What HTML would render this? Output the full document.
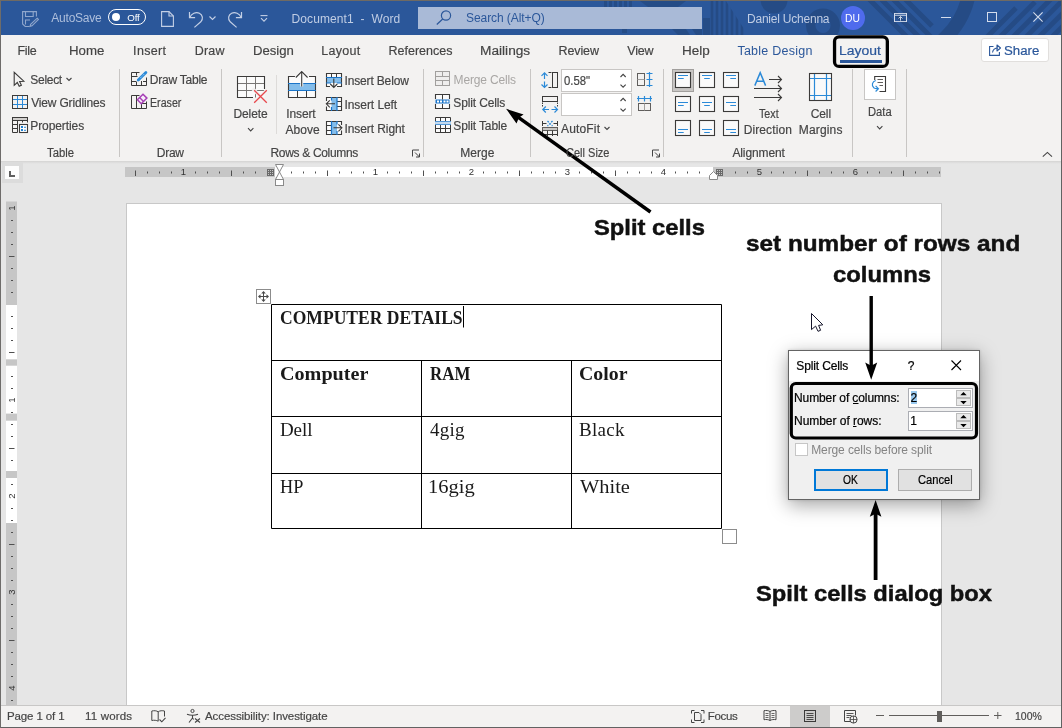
<!DOCTYPE html>
<html><head><meta charset="utf-8"><title>Document1 - Word</title>
<style>
html,body{margin:0;padding:0;}
body{width:1062px;height:728px;overflow:hidden;position:relative;background:#e6e6e6;font-family:"Liberation Sans",sans-serif;font-size:12px;color:#444;}
.a{position:absolute;}
.t{position:absolute;white-space:nowrap;line-height:normal;}
.rn{position:absolute;white-space:nowrap;}
.sep{position:absolute;width:1px;background:#c8c6c4;top:69px;height:88px;}
svg{position:absolute;overflow:visible;}
#titlebar{left:0;top:0;width:1062px;height:35px;background:#2b579a;}
#tabs{left:0;top:35px;width:1062px;height:33px;background:#f3f2f1;}
#ribbon{left:0;top:68px;width:1062px;height:93px;background:#f3f2f1;}
#ribshadow{left:0;top:161px;width:1062px;height:3px;background:linear-gradient(#d4d3d2,#e0e0e0 60%,#e6e6e6);}
#page{left:126px;top:203px;width:814px;height:502px;background:#fff;border:1px solid #c8c8c8;border-bottom:none;}
#status{left:0;top:705px;width:1062px;height:23px;background:#f3f2f1;border-top:1px solid #c8c7c6;box-sizing:border-box;}
</style></head><body>
<div id="titlebar" class="a"></div>
<div id="tabs" class="a"></div>
<div id="ribbon" class="a"></div>
<div id="ribshadow" class="a"></div>
<div id="page" class="a"></div>
<div id="status" class="a"></div>
<!-- title bar pattern -->
<svg class="a" style="left:700px;top:1px;" width="362" height="34" viewBox="700 1 362 34">
 <defs><clipPath id="tbc"><rect x="700" y="1" width="362" height="34"/></clipPath>
 <clipPath id="tbr"><rect x="925" y="1" width="137" height="34"/></clipPath>
 <clipPath id="tbv"><path d="M706 1H726L748 35H706Z"/></clipPath></defs>
 <g clip-path="url(#tbc)" fill="none" stroke="#000" opacity="0.13">
  <circle cx="774" cy="0" r="13.500" fill="#000" stroke="none"/>
  <circle cx="823" cy="25.500" r="12.300" stroke-width="9.500"/>
  <circle cx="890" cy="-20" r="80" stroke-width="14" clip-path="url(#tbr)"/>
  <g stroke-width="2.600" clip-path="url(#tbv)">
   <path d="M712 1v34M717 1v34M722 1v34M727 1v34M732 1v34M737 1v34M742 1v34"/>
  </g>
  <g stroke-width="5">
   <path d="M866 -4l44 44M878 -4l44 44M890 -4l44 44M902 -4l30 30"/>
   <path d="M984 40l32-32M997 40l38-38M1010 40l44-44M1023 40l44-44M1036 40l44-44M1049 40l44-44"/>
  </g>
 </g>
</svg>
<svg class="a" style="left:600px;top:1px;" width="110" height="34" viewBox="600 1 110 34">
 <g fill="#000" opacity="0.12">
  <path d="M604 1h3v6h-3zM609 1h3v6h-3zM614 1h3v6h-3zM619 1h3v6h-3zM624 1h3v6h-3zM629 1h3v6h-3z"/>
  <path d="M640 1h46l-8 6h-30z"/>
  <path d="M622 29h5v4h-5zM672 29h14l4 6h-12zM692 29h10v6h-6z"/>
  <path d="M703 18h7v17h-7z"/>
 </g>
</svg>
<!-- save icon -->
<svg class="a" style="left:22px;top:11px;" width="17" height="16" viewBox="0 0 17 16" fill="none" stroke="#8fa6cc" stroke-width="1.1">
 <path d="M7.5 15.5H3.2L0.6 13V0.6H14.4V5.5"/><path d="M3.5 0.6V5.5H11.2V0.6"/><path d="M3.5 13.5V9H8"/>
 <path d="M15.2 7.2l1.2 1.2-6.4 6.4-2 .6.6-2z"/>
</svg>
<!-- toggle -->
<div class="a" style="left:108px;top:9px;width:36px;height:14px;border:1px solid #fff;border-radius:8px;"></div>
<div class="a" style="left:112px;top:13px;width:8px;height:8px;border-radius:4px;background:#fff;"></div>
<!-- new doc -->
<svg class="a" style="left:160.5px;top:11px;" width="13" height="16" viewBox="0 0 13 16" fill="none" stroke="#c3cfe5" stroke-width="1.1">
 <path d="M0.6 0.6H8L12.4 5V15.4H0.6z"/><path d="M8 0.6V5H12.4"/>
</svg>
<!-- undo -->
<svg class="a" style="left:188px;top:10.5px;" width="16" height="17" viewBox="0 0 16 17" fill="none" stroke="#c3cfe5" stroke-width="1.2">
 <path d="M1.5 1v5.6h5.6"/><path d="M1.8 6.4C3.5 2.6 7.8 0.4 11.4 2.2c3.4 1.8 4 6 1.4 8.6L6.4 16.4"/>
</svg>
<svg class="a" style="left:209px;top:15.5px;" width="7" height="4" viewBox="0 0 7 4" fill="none" stroke="#c3cfe5" stroke-width="1.1"><path d="M0.5 0.5l3 3 3-3"/></svg>
<!-- redo -->
<svg class="a" style="left:227px;top:10.5px;" width="16" height="17" viewBox="0 0 16 17" fill="none" stroke="#c3cfe5" stroke-width="1.2">
 <path d="M14.5 1v5.6H8.9"/><path d="M14.2 6.4C12.500 2.6 8.2 0.4 4.6 2.2 1.2 4 0.600 8.2 3.200 10.8L9.6 16.4"/>
</svg>
<!-- customize qat -->
<svg class="a" style="left:259.5px;top:14.5px;" width="8" height="7" viewBox="0 0 8 7" fill="none" stroke="#c3cfe5" stroke-width="1.1"><path d="M0.5 0.6h7"/><path d="M1 3.2l3 3 3-3"/></svg>
<!-- search box -->
<div class="a" style="left:418px;top:7px;width:284px;height:22px;background:#a9bad7;"></div>
<svg class="a" style="left:436.200px;top:9.600px;" width="16" height="15" viewBox="0 0 16 15" fill="none" stroke="#2b579a" stroke-width="1.2">
 <circle cx="10" cy="5.500" r="4.600"/><path d="M6.700 9L0.800 14.500"/>
</svg>
<!-- avatar -->
<div class="a" style="left:841px;top:6px;width:24px;height:24px;border-radius:12px;background:#4f6bed;"></div>
<!-- ribbon display options -->
<svg class="a" style="left:893.500px;top:13px;" width="13" height="9" viewBox="0 0 13 10" preserveAspectRatio="none" fill="none" stroke="#d5ddec" stroke-width="1">
 <rect x="0.5" y="0.5" width="12" height="9"/><path d="M0.5 2.500h12"/><path d="M6.5 8.500V4M4.500 6l2-2 2 2"/>
</svg>
<!-- min/max/close -->
<div class="a" style="left:941px;top:17px;width:10px;height:1px;background:#d5ddec;"></div>
<div class="a" style="left:987px;top:12px;width:8px;height:8px;border:1px solid #d5ddec;"></div>
<svg class="a" style="left:1033px;top:12px;" width="10" height="10" viewBox="0 0 10 10" stroke="#d5ddec" stroke-width="1.1" fill="none"><path d="M0.400 0.400l9.200 9.200M9.600 0.400l-9.200 9.200"/></svg>

<!-- tabs extras -->
<div class="a" style="left:840px;top:60px;width:42px;height:3px;background:#2b579a;"></div>
<svg class="a" style="left:0;top:0;" width="1062" height="80" viewBox="0 0 1062 80" fill="none"><rect x="834.550" y="36.850" width="52.800" height="29.600" rx="4.500" stroke="#000" stroke-width="3.300"/></svg>
<div class="a" style="left:981px;top:38px;width:66px;height:22px;border:1px solid #e1dfdd;border-radius:3px;background:#fff;"></div>
<svg class="a" style="left:989px;top:43.500px;" width="13" height="12" viewBox="0 0 13 12" fill="none" stroke="#2b579a" stroke-width="1.1">
 <path d="M4.500 2.500H0.600V11.400H10.400V8"/><path d="M3.500 8.500C4 5.500 6 4 9 4"/><path d="M8 1l3.500 3L8 7z" stroke-linejoin="round"/>
</svg>

<!-- separators -->
<div class="sep" style="left:119px;"></div>
<div class="sep" style="left:221px;"></div>
<div class="sep" style="left:423px;"></div>
<div class="sep" style="left:530px;"></div>
<div class="sep" style="left:663px;"></div>
<div class="sep" style="left:852px;"></div>
<div class="sep" style="left:906px;"></div>
<div class="a" style="left:276px;top:75px;width:1px;height:59px;background:#dddbd9;"></div>
<!-- Select -->
<svg class="a" style="left:0;top:0;" width="1062" height="170" viewBox="0 0 1062 170" fill="none">
 <path d="M14.200 72.300V85.300L17.300 82.500 19.200 86.300 21.400 85.200 19.600 81.400 23.800 81.200Z" stroke="#3b3a39" stroke-width="1.1" stroke-linejoin="miter"/>
 <path d="M66.500 78l2.500 2.500 2.500-2.500" stroke="#444" stroke-width="1.100"/>
 <!-- view gridlines -->
 <path d="M17.500 95.500v13M22.500 95.500v13M12.500 99.500h15M12.500 104.500h15" stroke="#2b8ad8" stroke-width="1"/>
 <rect x="12.500" y="95.500" width="15" height="13" stroke="#3b3a39" stroke-width="1"/>
 <!-- properties -->
 <rect x="12.500" y="117.500" width="15" height="3" fill="#d2d0ce" stroke="#3b3a39" stroke-width="1"/>
 <path d="M12.500 120.500V132.500H17.500M12.500 124.500h5M12.500 128.500h5M17.500 120.500v12M22.500 120.500v2M27.500 120.500v2" stroke="#3b3a39" stroke-width="1"/>
 <rect x="19.500" y="124.500" width="8" height="8" fill="#fff" stroke="#3b3a39" stroke-width="1.100"/>
 <path d="M21 126h2v2h-2zM21 129h2v2h-2zM24 126.800h2v1h-2zM24 129.800h2v1h-2z" fill="#1e7fd0" stroke="none"/>
 <!-- draw table -->
 <path d="M131.500 72.500v13h15v-8M131.500 72.500h8M131.500 76.500h6M131.500 81.500h5M136.500 72.500v3M136.500 82v3.500M141.500 81v4.500M143 81.500h3.500" stroke="#3b3a39" stroke-width="1"/>
 <path d="M138.300 80l7.600-7.600" stroke="#2b8ad8" stroke-width="2.800" stroke-linecap="round"/>
 <path d="M137.400 80.800l1.600-0.400-1.200-1.200z" fill="#2b8ad8" stroke="#2b8ad8" stroke-width="0.800"/>
 <path d="M140.500 77.800l4.200-4.200" stroke="#fff" stroke-width="0.700" stroke-dasharray="1 1"/>
 <!-- eraser -->
 <path d="M131.500 95.500v13h15v-7M131.500 95.500h8M136.500 95.500v13M141.500 103v5.500M141.500 103.500h5" stroke="#3b3a39" stroke-width="1"/>
 <path d="M143 94.200l3.900 3.900-5.600 5.600-3.900-3.900z" fill="#f6eef8" stroke="#a63fb5" stroke-width="1.500" stroke-linejoin="miter"/>
 <path d="M139.600 97.500l3.900 3.900" stroke="#a63fb5" stroke-width="1.400"/>
</svg>

<svg class="a" style="left:0;top:0;" width="1062" height="170" viewBox="0 0 1062 170" fill="none">
 <!-- Delete -->
 <rect x="237.500" y="76.500" width="27" height="21" fill="#fbfbfb" stroke="none"/>
 <path d="M246.500 76.500v21M255.500 76.500v21M237.500 83.500h27M237.500 90.500h27" stroke="#797775" stroke-width="1"/>
 <path d="M264.500 89V76.500H237.500V97.500H253" stroke="#3b3a39" stroke-width="1.100"/>
 <path d="M252.500 88.500L268.500 104.500M268.500 88.500L252.500 104.500" stroke="#f3f2f1" stroke-width="3.600"/>
 <path d="M254.200 90.200L266.800 102.800M266.800 90.200L254.200 102.800" stroke="#e8474c" stroke-width="1.300"/>
 <path d="M248 128.200l2.700 2.700 2.700-2.700" stroke="#444" stroke-width="1.100"/>
 <!-- Insert Above -->
 <rect x="288.500" y="76.500" width="27" height="21" fill="#fbfbfb" stroke="none"/>
 <rect x="288.500" y="83.500" width="27" height="7" fill="#83bdeb" stroke="none"/>
 <path d="M297.500 90.500v7M306.500 90.500v7" stroke="#3b3a39" stroke-width="1"/>
 <path d="M295 76.500H288.500V97.500H315.500V76.500H309" stroke="#3b3a39" stroke-width="1.100"/>
 <path d="M288 83.500h28M288 90.500h28" stroke="#1b75c9" stroke-width="1.200"/>
 <path d="M301.700 86.500V72M295.800 77.500l5.900-5.900 5.900 5.900" stroke="#fbfbfb" stroke-width="3"/>
 <path d="M301.700 86.500V72M295.800 77.500l5.900-5.900 5.900 5.900" stroke="#3b3a39" stroke-width="1.100"/>
 <!-- Insert Below -->
 <rect x="326.500" y="73.500" width="15" height="13" fill="#fbfbfb" stroke="none"/>
 <rect x="326.500" y="77.500" width="15" height="5.500" fill="#83bdeb" stroke="none"/>
 <path d="M331.500 73.500v4M336.500 73.500v4" stroke="#3b3a39" stroke-width="1"/>
 <path d="M330 86.500H326.500V73.500H341.500V86.500H337" stroke="#3b3a39" stroke-width="1.100"/>
 <path d="M326 77.500h16M326 83h5M337 83h5" stroke="#1b75c9" stroke-width="1.200"/>
 <path d="M333.800 78.500V87.300M330.300 84l3.500 3.500 3.500-3.500" stroke="#3b3a39" stroke-width="1.100"/>
 <!-- Insert Left -->
 <rect x="326.500" y="97.500" width="15" height="13" fill="#fbfbfb" stroke="none"/>
 <rect x="331.500" y="97.500" width="5.500" height="13" fill="#83bdeb" stroke="none"/>
 <path d="M337 101.500h4.500M337 106.500h4.500" stroke="#3b3a39" stroke-width="1"/>
 <path d="M326.500 101V97.500H341.500V110.500H326.500V106.500" stroke="#3b3a39" stroke-width="1.100"/>
 <path d="M331.500 97v3.500M331.500 107v4M337 97v14" stroke="#1b75c9" stroke-width="1.200"/>
 <path d="M335 103.800H326.500M329.800 100.300l-3.500 3.500 3.500 3.500" stroke="#3b3a39" stroke-width="1.100"/>
 <!-- Insert Right -->
 <rect x="326.500" y="121.500" width="15" height="13" fill="#fbfbfb" stroke="none"/>
 <rect x="331.500" y="121.500" width="5.500" height="13" fill="#83bdeb" stroke="none"/>
 <path d="M326.500 125.500h5M326.500 130.500h5" stroke="#3b3a39" stroke-width="1"/>
 <path d="M341.500 125V121.500H326.500V134.500H341.500V130.500" stroke="#3b3a39" stroke-width="1.100"/>
 <path d="M331.500 121v14M337 121v3.500M337 131v4" stroke="#1b75c9" stroke-width="1.200"/>
 <path d="M333.500 127.800H341.800M338.400 124.300l3.500 3.500-3.500 3.500" stroke="#3b3a39" stroke-width="1.100"/>
 <!-- dialog launcher rows&cols -->
 <path d="M412.500 156.500v-6.500h6.500" stroke="#444" stroke-width="1"/><path d="M415 152.500l4.500 4.500M419.500 153.500v3.500h-3.500" stroke="#444" stroke-width="1"/>
 <!-- dialog launcher cell size -->
 <path d="M652.500 156.500v-6.500h6.500" stroke="#444" stroke-width="1"/><path d="M655 152.500l4.500 4.500M659.500 153.500v3.500h-3.500" stroke="#444" stroke-width="1"/>
</svg>

<div class="a" style="left:561px;top:69px;width:69px;height:21px;background:#fff;border:1px solid #c8c6c4;"></div>
<div class="a" style="left:561px;top:93px;width:69px;height:21px;background:#fff;border:1px solid #c8c6c4;"></div>
<svg class="a" style="left:0;top:0;" width="1062" height="170" viewBox="0 0 1062 170" fill="none">
 <!-- Merge Cells (disabled) -->
 <rect x="435.500" y="71.500" width="14" height="14" fill="#efeeed" stroke="#a19f9d" stroke-width="1"/>
 <path d="M435.500 76.500h14M435.500 80.500h14M442.500 71.500v5M442.500 80.500v5" stroke="#a19f9d" stroke-width="1"/>
 <!-- Split Cells -->
 <rect x="435.500" y="94.500" width="14" height="14" fill="#fbfbfb" stroke="none"/>
 <rect x="435.500" y="99.500" width="14" height="4" fill="#1b75c9" stroke="none"/>
 <path d="M437 100.500h2v2h-2zM440 100.500h2v2h-2zM443.500 100.500h2v2h-2zM446.500 100.500h2v2h-2z" fill="#fff" stroke="none"/>
 <path d="M442.500 94.500v5M442.500 104v4.500" stroke="#3b3a39" stroke-width="1"/>
 <path d="M435.500 99V94.500H449.500V99M435.500 104V108.500H449.500V104" stroke="#3b3a39" stroke-width="1.100"/>
 <!-- Split Table -->
 <rect x="435.500" y="117.500" width="15" height="15" fill="#fbfbfb" stroke="none"/>
 <path d="M435.500 121V117.500H450.500V121M440.500 117.500v3.500M445.500 117.500v3.500" stroke="#3b3a39" stroke-width="1"/>
 <path d="M435 121.700h16M435 124.300h16" stroke="#1b75c9" stroke-width="1.100"/>
 <path d="M435.500 125V132.500H450.500V125M440.500 125v7.500M445.500 125v7.500M435.500 128.500h15" stroke="#3b3a39" stroke-width="1"/>
 <!-- Height icon -->
 <path d="M544.500 73V79M544.500 81.500V87.500M541.500 75.800l3-3 3 3M541.500 84.500l3 3 3-3" stroke="#2b8ad8" stroke-width="1.200"/>
 <path d="M548.500 72.500h3M548.500 87.500h3" stroke="#3b3a39" stroke-width="1"/>
 <rect x="552.500" y="72.500" width="5" height="15" stroke="#3b3a39" stroke-width="1"/>
 <!-- Width icon -->
 <rect x="542.500" y="96.500" width="15" height="5" stroke="#3b3a39" stroke-width="1"/>
 <path d="M542.500 102.500v4M557.500 102.500v4" stroke="#3b3a39" stroke-width="1" stroke-dasharray="1.500 1"/>
 <path d="M543 109.500H549M551.500 109.500H557.500M545.800 106.500l-3 3 3 3M554.500 106.500l3 3-3 3" stroke="#2b8ad8" stroke-width="1.200"/>
 <!-- spinners -->
 <path d="M620.500 77l2.600-2.600 2.600 2.600M620.500 84.600l2.600 2.600 2.600-2.600" stroke="#444" stroke-width="1.100"/>
 <path d="M620.500 101l2.600-2.600 2.600 2.600M620.500 108.600l2.600 2.600 2.600-2.600" stroke="#444" stroke-width="1.100"/>
 <!-- Distribute rows -->
 <rect x="637.500" y="73.500" width="7" height="12" stroke="#605e5c" stroke-width="1"/><path d="M637.500 79.500h7" stroke="#a19f9d" stroke-width="1"/>
 <path d="M649.500 72v15M646.500 73.500h6M646.500 79.500h6M646.500 85.500h6" stroke="#2b8ad8" stroke-width="1.200"/>
 <!-- Distribute cols -->
 <path d="M637 98.500h15M638.500 96v5.500M644.500 96v5.500M650.500 96v5.500" stroke="#2b8ad8" stroke-width="1.200"/>
 <rect x="638.500" y="103.500" width="12" height="7" stroke="#605e5c" stroke-width="1"/><path d="M644.500 103.500v7" stroke="#a19f9d" stroke-width="1"/>
 <!-- AutoFit icon -->
 <path d="M542.500 121v5M557.500 121v5M542.500 123.500h4M553.500 123.500h4" stroke="#3b3a39" stroke-width="1"/>
 <path d="M547.500 121l5 5M552.500 121l-5 5" stroke="#2b8ad8" stroke-width="1.300" stroke-dasharray="1.800 1.200"/>
 <rect x="542.500" y="127.500" width="15" height="3" fill="#c8c6c4" stroke="#605e5c" stroke-width="1"/>
 <path d="M542.500 130.500V136M557.500 130.500V136M547.500 130.500V136M552.500 130.500V136M542.500 134.500h15" stroke="#3b3a39" stroke-width="1"/>
 <path d="M604.500 127l2.500 2.500 2.500-2.500" stroke="#444" stroke-width="1.100"/>
</svg>

<div class="a" style="left:864px;top:69px;width:32px;height:31px;background:#fff;border:1px solid #c8c6c4;box-sizing:border-box;"></div>
<div class="a" style="left:672px;top:69px;width:20px;height:21px;background:#c8c6c4;border:1px solid #a19f9d;"></div>
<svg class="a" style="left:0;top:0;" width="1062" height="170" viewBox="0 0 1062 170" fill="none">
<rect x="675.5" y="72.5" width="15" height="15" fill="#fafafa" stroke="#3b3a39" stroke-width="1.1"/>
<path d="M678.0 75.5H688.0M678.0 78.5H683.7" stroke="#2b8ad8" stroke-width="1.2"/>
<rect x="699.5" y="72.5" width="15" height="15" fill="#fafafa" stroke="#3b3a39" stroke-width="1.1"/>
<path d="M702.0 75.5H712.0M704.2 78.5H709.8" stroke="#2b8ad8" stroke-width="1.2"/>
<rect x="723.5" y="72.5" width="15" height="15" fill="#fafafa" stroke="#3b3a39" stroke-width="1.1"/>
<path d="M726.0 75.5H736.0M730.3 78.5H736.0" stroke="#2b8ad8" stroke-width="1.2"/>
<rect x="675.5" y="96.5" width="15" height="15" fill="#fafafa" stroke="#3b3a39" stroke-width="1.1"/>
<path d="M678.0 102.5H688.0M678.0 105.5H683.7" stroke="#2b8ad8" stroke-width="1.2"/>
<rect x="699.5" y="96.5" width="15" height="15" fill="#fafafa" stroke="#3b3a39" stroke-width="1.1"/>
<path d="M702.0 102.5H712.0M704.2 105.5H709.8" stroke="#2b8ad8" stroke-width="1.2"/>
<rect x="723.5" y="96.5" width="15" height="15" fill="#fafafa" stroke="#3b3a39" stroke-width="1.1"/>
<path d="M726.0 102.5H736.0M730.3 105.5H736.0" stroke="#2b8ad8" stroke-width="1.2"/>
<rect x="675.5" y="120.5" width="15" height="15" fill="#fafafa" stroke="#3b3a39" stroke-width="1.1"/>
<path d="M678.0 129.5H688.0M678.0 132.5H683.7" stroke="#2b8ad8" stroke-width="1.2"/>
<rect x="699.5" y="120.5" width="15" height="15" fill="#fafafa" stroke="#3b3a39" stroke-width="1.1"/>
<path d="M702.0 129.5H712.0M704.2 132.5H709.8" stroke="#2b8ad8" stroke-width="1.2"/>
<rect x="723.5" y="120.5" width="15" height="15" fill="#fafafa" stroke="#3b3a39" stroke-width="1.1"/>
<path d="M726.0 129.5H736.0M730.3 132.5H736.0" stroke="#2b8ad8" stroke-width="1.2"/>
<path d="M769 79.500H781.500M778 76l3.500 3.500-3.500 3.500" stroke="#3b3a39" stroke-width="1.1"/>
<path d="M754 88.500H781.500M778 85l3.500 3.500-3.500 3.500" stroke="#3b3a39" stroke-width="1.1"/>
<path d="M754 97.500H781.500M778 94l3.500 3.500-3.500 3.500" stroke="#3b3a39" stroke-width="1.1"/>
<path d="M754.800 85.600L760.200 72.600 765.600 85.600M756.600 81.200H763.800" stroke="#2b8ad8" stroke-width="1.500" stroke-linejoin="miter"/>
<rect x="809.500" y="73.500" width="22" height="27" fill="#fafafa" stroke="none"/>
<path d="M814.500 73.500v27M826.500 73.500v27M809.500 78.500h22M809.500 95.500h22" stroke="#2b8ad8" stroke-width="1.200"/>
<rect x="809.500" y="73.500" width="22" height="27" stroke="#3b3a39" stroke-width="1.100"/>
<path d="M874.700 80V76.500H885.500V91.500H879.500" stroke="#3b3a39" stroke-width="1.100"/>
<path d="M877.500 79.500h5.500M877.500 82.500h5.500M879.500 85.500h3.500" stroke="#605e5c" stroke-width="1"/>
<path d="M875.800 80.500C872.200 81.500 871.200 85.500 873.800 87.700 874.800 88.500 876.200 88.800 877.800 88.700M875.600 85.900l2.800 2.800-2.800 2.800" stroke="#2b8ad8" stroke-width="1.200"/>
<path d="M877 126.200l2.700 2.700 2.700-2.700" stroke="#444" stroke-width="1.100"/>
<path d="M1042.800 156.700l4.600-4.300 4.600 4.300" stroke="#444" stroke-width="1.100"/>
</svg>
<div class="a" style="left:2px;top:162px;width:21px;height:21px;background:#dcdcdc;"></div>
<div class="a" style="left:5px;top:166px;width:14px;height:13px;background:#fdfdfd;"></div>
<div class="a" style="left:9px;top:171px;width:2px;height:6px;background:#5f5f5f;"></div><div class="a" style="left:9px;top:175px;width:6px;height:2px;background:#5f5f5f;"></div>
<div class="a" style="left:125px;top:167px;width:816px;height:10px;background:#c6c6c6;"></div>
<div class="a" style="left:275px;top:167px;width:438px;height:10px;background:#fff;"></div>
<svg class="a" style="left:0;top:0;" width="1062" height="728" viewBox="0 0 1062 728" fill="none">
<path d="M135.5 170.5v5.5M147.5 171.5v2M159.5 171.5v2M171.5 171.5v2M195.5 171.5v2M207.5 171.5v2M219.5 171.5v2M231.5 170.5v5.5M243.5 171.5v2M255.5 171.5v2M291.5 171.5v2M303.5 171.5v2M315.5 171.5v2M327.5 170.5v5.5M339.5 171.5v2M351.5 171.5v2M363.5 171.5v2M387.5 171.5v2M399.5 171.5v2M411.5 171.5v2M423.5 170.5v5.5M435.5 171.5v2M447.5 171.5v2M459.5 171.5v2M483.5 171.5v2M495.5 171.5v2M507.5 171.5v2M519.5 170.5v5.5M531.5 171.5v2M543.5 171.5v2M555.5 171.5v2M579.5 171.5v2M591.5 171.5v2M603.5 171.5v2M615.5 170.5v5.5M627.5 171.5v2M639.5 171.5v2M651.5 171.5v2M675.5 171.5v2M687.5 171.5v2M699.5 171.5v2M735.5 171.5v2M747.5 171.5v2M771.5 171.5v2M783.5 171.5v2M795.5 171.5v2M807.5 170.5v5.5M819.5 171.5v2M831.5 171.5v2M843.5 171.5v2M867.5 171.5v2M879.5 171.5v2M891.5 171.5v2M903.5 170.5v5.5M915.5 171.5v2M927.5 171.5v2M939.5 171.5v2" stroke="#505050" stroke-width="1"/>
<path d="M267.5 169v7M269.5 169v7M271.5 169v7M273.5 169v7M267 169.5h7M267 171.5h7M267 173.5h7M267 175.5h7" stroke="#6a6a6a" stroke-width="1"/>
<path d="M716.5 169v7M718.5 169v7M720.5 169v7M722.5 169v7M716 169.5h7M716 171.5h7M716 173.5h7M716 175.5h7" stroke="#6a6a6a" stroke-width="1"/>
<path d="M275.500 164.500H283.500L279.500 172L283.500 179.500H275.500L279.500 172Z" fill="#fff" stroke="#8a8a8a" stroke-width="1"/>
<rect x="275.500" y="179.500" width="8" height="6" fill="#fff" stroke="#8a8a8a" stroke-width="1"/>
<path d="M709.500 179.500V175.500L713.500 171.500L717.500 175.500V179.500Z" fill="#fff" stroke="#8a8a8a" stroke-width="1"/>
<rect x="6" y="201.500" width="11" height="503.500" fill="#c6c6c6"/>
<rect x="6" y="305" width="11" height="54.30000000000001" fill="#fff"/>
<rect x="6" y="365.7" width="11" height="47.900000000000034" fill="#fff"/>
<rect x="6" y="420.7" width="11" height="50.30000000000001" fill="#fff"/>
<rect x="6" y="478" width="11" height="45" fill="#fff"/>
<path d="M11 220.5h2M11 232.5h2M11 244.5h2M9 256.5h5.5M11 268.5h2M11 280.5h2M11 292.5h2M11 316.5h2M11 328.5h2M11 340.5h2M9 352.5h5.5M11 376.5h2M11 388.5h2M11 412.5h2M11 424.5h2M11 436.5h2M9 448.5h5.5M11 460.5h2M11 484.5h2M11 508.5h2M11 520.5h2M11 532.5h2M9 544.5h5.5M11 556.5h2M11 568.5h2M11 580.5h2M11 604.5h2M11 616.5h2M11 628.5h2M9 640.5h5.5M11 652.5h2M11 664.5h2M11 676.5h2M11 700.5h2" stroke="#505050" stroke-width="1"/>
</svg>
<div class="a" style="left:0;top:0;width:1062px;height:728px;will-change:transform;">
<span class="rn" style="left:178.3px;top:167px;width:10px;text-align:center;font-size:9.500px;line-height:10px;color:#333;">1</span>
<span class="rn" style="left:370.3px;top:167px;width:10px;text-align:center;font-size:9.500px;line-height:10px;color:#333;">1</span>
<span class="rn" style="left:466.3px;top:167px;width:10px;text-align:center;font-size:9.500px;line-height:10px;color:#333;">2</span>
<span class="rn" style="left:562.3px;top:167px;width:10px;text-align:center;font-size:9.500px;line-height:10px;color:#333;">3</span>
<span class="rn" style="left:658.3px;top:167px;width:10px;text-align:center;font-size:9.500px;line-height:10px;color:#333;">4</span>
<span class="rn" style="left:754.3px;top:167px;width:10px;text-align:center;font-size:9.500px;line-height:10px;color:#333;">5</span>
<span class="rn" style="left:850.3px;top:167px;width:10px;text-align:center;font-size:9.500px;line-height:10px;color:#333;">6</span>
<span class="rn" style="left:6.5px;top:203.4px;width:10px;height:10px;text-align:center;font-size:9.500px;line-height:10px;color:#333;transform:rotate(-90deg);">1</span>
<span class="rn" style="left:6.5px;top:395.4px;width:10px;height:10px;text-align:center;font-size:9.500px;line-height:10px;color:#333;transform:rotate(-90deg);">1</span>
<span class="rn" style="left:6.5px;top:491.4px;width:10px;height:10px;text-align:center;font-size:9.500px;line-height:10px;color:#333;transform:rotate(-90deg);">2</span>
<span class="rn" style="left:6.5px;top:587.4px;width:10px;height:10px;text-align:center;font-size:9.500px;line-height:10px;color:#333;transform:rotate(-90deg);">3</span>
<span class="rn" style="left:6.5px;top:683.4px;width:10px;height:10px;text-align:center;font-size:9.500px;line-height:10px;color:#333;transform:rotate(-90deg);">4</span>
</div>
<!-- document table -->
<svg class="a" style="left:0;top:0;" width="1062" height="728" viewBox="0 0 1062 728" fill="none">
 <path d="M271.500 304.500H721.500V528.500H271.500ZM271 360.500H722M271 416.500H722M271 473.500H722M421.500 360.500V528.500M571.500 360.500V528.500" stroke="#000" stroke-width="1"/>
 <!-- move handle -->
 <rect x="256.500" y="289.500" width="14" height="14" fill="#fff" stroke="#8c8c8c" stroke-width="1"/>
 <path d="M259 296.500h9M263.500 292v9" stroke="#4a4a4a" stroke-width="1"/>
 <path d="M258 296.500l2.500-2.300v4.600zM269 296.500l-2.500-2.300v4.600zM263.500 291l-2.300 2.500h4.600zM263.500 302l-2.300-2.500h4.600z" fill="#4a4a4a"/>
 <!-- resize handle -->
 <rect x="722.500" y="529.500" width="14" height="14" fill="#fff" stroke="#8c8c8c" stroke-width="1"/>
 <!-- text caret -->
 <path d="M463.500 306v21.500" stroke="#000" stroke-width="1"/>
</svg>

<!-- dialog -->
<div class="a" style="left:788px;top:350px;width:190px;height:148px;background:#f0f0f0;border:1px solid #646464;box-shadow:0 5px 18px rgba(0,0,0,0.36),0 0 3px rgba(0,0,0,0.15);"></div>
<div class="a" style="left:789px;top:351px;width:190px;height:30px;background:#fff;"></div>
<div class="a" style="left:908px;top:388px;width:63px;height:18px;background:#fff;border:1px solid #abadb3;"></div>
<div class="a" style="left:908px;top:411px;width:63px;height:18px;background:#fff;border:1px solid #abadb3;"></div>
<div class="a" style="left:911px;top:391px;width:6px;height:13px;background:#99c9ef;"></div>
<div class="a" style="left:956px;top:390px;width:15px;height:8px;background:#e9e9e9;border:1px solid #bcbcbc;box-sizing:border-box;"></div>
<div class="a" style="left:956px;top:398px;width:15px;height:8px;background:#e9e9e9;border:1px solid #bcbcbc;box-sizing:border-box;"></div>
<div class="a" style="left:956px;top:413px;width:15px;height:8px;background:#e9e9e9;border:1px solid #bcbcbc;box-sizing:border-box;"></div>
<div class="a" style="left:956px;top:421px;width:15px;height:8px;background:#e9e9e9;border:1px solid #bcbcbc;box-sizing:border-box;"></div>
<div class="a" style="left:795px;top:443px;width:11px;height:11px;background:#fff;border:1px solid #c6c6c6;"></div>
<div class="a" style="left:814px;top:469px;width:70px;height:18px;background:#e1e1e1;border:2px solid #0078d7;"></div>
<div class="a" style="left:898px;top:469px;width:72px;height:20px;background:#e1e1e1;border:1px solid #adadad;"></div>
<svg class="a" style="left:0;top:0;" width="1062" height="728" viewBox="0 0 1062 728" fill="none">
 <path d="M951.500 360.500l9.500 9.500M961 360.500l-9.500 9.500" stroke="#000" stroke-width="1.100"/>
 <path d="M960.300 395.300l3.200-3.400 3.200 3.400zM960.300 400.900l3.200 3.400 3.200-3.400zM960.300 418.300l3.200-3.400 3.200 3.400zM960.300 423.900l3.200 3.400 3.200-3.400z" fill="#000"/>
 <path d="M853 403.500h5.500M853 426.500h3.500" stroke="#000" stroke-width="1"/>
 <rect x="791.300" y="383.500" width="185.200" height="54.500" rx="4.500" stroke="#000" stroke-width="3.200"/>
</svg>

<svg class="a" style="left:0;top:0;" width="1062" height="728" viewBox="0 0 1062 728" fill="none">
 <!-- arrow 1: to Split Cells -->
 <path d="M650.500 212L517 116.300" stroke="#000" stroke-width="3.500"/>
 <path d="M506.100 108.800L523.600 114.500L519 117.400L516.500 123.500Z" fill="#000"/>
 <!-- arrow 2: down to dialog -->
 <path d="M871.200 296V368" stroke="#000" stroke-width="3.400"/>
 <path d="M871.200 379.800L865.200 362.500L871.200 365.800L877.200 362.500Z" fill="#000"/>
 <!-- arrow 3: up to dialog -->
 <path d="M875.600 580V512" stroke="#000" stroke-width="3.800"/>
 <path d="M875.600 500L869.800 516.800L875.600 513.800L881.400 516.800Z" fill="#000"/>
 <!-- mouse cursor -->
 <path d="M811.500 313.500V329.600L815.600 326.100L818 331.300L820.600 330.300L818.600 325.400L822.800 324.800Z" fill="#fff" stroke="#15152a" stroke-width="1" stroke-linejoin="round"/>
</svg>

<div class="a" style="left:790px;top:706px;width:40px;height:22px;background:#cdcccb;"></div>
<svg class="a" style="left:0;top:0;" width="1062" height="728" viewBox="0 0 1062 728" fill="none">
 <!-- book / proofing -->
 <path d="M158.200 711.800V721.200M158.200 711.800C156.500 710.600 154 710.500 151.800 711V720.500C154 720 156.500 720.200 158.200 721.200M158.200 711.800C159.800 710.600 162.300 710.500 164.500 711V716.500" stroke="#444" stroke-width="1"/>
 <path d="M159.500 719.500l2.300 2.300 3.700-3.900" stroke="#444" stroke-width="1.100"/>
 <!-- accessibility -->
 <circle cx="192.500" cy="711" r="1.600" stroke="#444" stroke-width="1"/>
 <path d="M187 714.200c2 .9 3.700 1.100 5.500 1.100s3.500-.2 5.500-1.100M192.500 715.300v2.700M192.500 718l-3.500 4.500M192.500 718l1.200 1.500" stroke="#444" stroke-width="1.100"/>
 <path d="M195 718.500l5 4M200 718.500l-5 4" stroke="#444" stroke-width="1.100"/>
 <!-- focus -->
 <path d="M691.500 713.500v-3h3M701 710.500h3v3M704 719.500v3h-3M694.500 722.500h-3v-3" stroke="#444" stroke-width="1"/>
 <path d="M694.500 712.500h4.500l2 2v6h-6.500z" stroke="#444" stroke-width="1"/>
 <!-- read mode -->
 <path d="M770 711.500v9M770 711.500c-1.500-1-4-1.200-6-.8v9c2-.4 4.500-.2 6 .8M770 711.500c1.500-1 4-1.200 6-.8v9c-2-.4-4.500-.2-6 .8" stroke="#444" stroke-width="1"/>
 <path d="M765.500 713.500h3M765.500 715.500h3M765.500 717.500h3M771.500 713.500h3M771.500 715.500h3M771.500 717.500h3" stroke="#444" stroke-width="0.800"/>
 <!-- print layout -->
 <rect x="804.500" y="710.500" width="11" height="11" stroke="#3b3a39" stroke-width="1"/>
 <path d="M806.500 713.500h7M806.500 715.500h7M806.500 717.500h7M806.500 719.500h7" stroke="#3b3a39" stroke-width="0.900"/>
 <!-- web layout -->
 <path d="M850 721.500h-5.500v-11h11v5" stroke="#444" stroke-width="1"/>
 <path d="M846.500 713.500h7M846.500 715.500h5M846.500 717.500h3" stroke="#444" stroke-width="0.900"/>
 <circle cx="853.500" cy="719.500" r="3.600" fill="#f3f2f1" stroke="#444" stroke-width="1"/>
 <path d="M850 719.500h7M853.500 716v7" stroke="#444" stroke-width="0.800"/>
 <!-- zoom -->
 <path d="M876 715.500h8M889 715.500h100M994 715.500h7.500M997.800 712v7" stroke="#605e5c" stroke-width="1"/>
 <rect x="937" y="711" width="5" height="11" fill="#605e5c"/>
</svg>
<div class="a" style="left:1061px;top:0;width:1px;height:728px;background:#626262;"></div>
<div class="a" style="left:0;top:727px;width:1062px;height:1px;background:#626262;"></div>


<div class="a" style="left:0;top:0;width:1062px;height:728px;will-change:transform;">
<span class="t" style='left:51.30px;top:10.90px;font-size:12px;color:#aebfdc;letter-spacing:-0.225px;'>AutoSave</span>
<span class="t" style='left:127.30px;top:12.00px;font-size:9.7px;color:#ffffff;letter-spacing:-0.150px;'>Off</span>
<span class="t" style='left:291.61px;top:11.50px;font-size:12px;color:#c0cde4;letter-spacing:0.081px;'>Document1 &nbsp;- &nbsp;Word</span>
<span class="t" style='left:466.09px;top:11.00px;font-size:12px;color:#2b579a;letter-spacing:-0.084px;'>Search (Alt+Q)</span>
<span class="t" style='left:747.01px;top:11.50px;font-size:12px;color:#c0cde4;letter-spacing:-0.219px;'>Daniel Uchenna</span>
<span class="t" style='left:845.03px;top:12.80px;font-size:10.3px;color:#ffffff;letter-spacing:0.135px;'>DU</span>
<span class="t" style='left:17.50px;top:44.00px;font-size:12.5px;color:#444;-webkit-text-stroke:0.18px #444;letter-spacing:-0.300px;'>File</span>
<span class="t" style='left:69.44px;top:44.00px;font-size:12.5px;color:#444;-webkit-text-stroke:0.18px #444;transform:scaleX(1.0594);transform-origin:0 0;'>Home</span>
<span class="t" style='left:133.10px;top:44.00px;font-size:12.5px;color:#444;-webkit-text-stroke:0.18px #444;letter-spacing:0.323px;'>Insert</span>
<span class="t" style='left:194.70px;top:44.00px;font-size:12.5px;color:#444;-webkit-text-stroke:0.18px #444;letter-spacing:0.214px;'>Draw</span>
<span class="t" style='left:252.65px;top:44.00px;font-size:12.5px;color:#444;-webkit-text-stroke:0.18px #444;transform:scaleX(1.0508);transform-origin:0 0;'>Design</span>
<span class="t" style='left:321.20px;top:44.00px;font-size:12.5px;color:#444;-webkit-text-stroke:0.18px #444;letter-spacing:0.290px;'>Layout</span>
<span class="t" style='left:388.50px;top:44.00px;font-size:12.5px;color:#444;-webkit-text-stroke:0.18px #444;letter-spacing:0.011px;'>References</span>
<span class="t" style='left:480.20px;top:44.00px;font-size:12.5px;color:#444;-webkit-text-stroke:0.18px #444;transform:scaleX(1.0953);transform-origin:0 0;'>Mailings</span>
<span class="t" style='left:558.50px;top:44.00px;font-size:12.5px;color:#444;-webkit-text-stroke:0.18px #444;letter-spacing:-0.101px;'>Review</span>
<span class="t" style='left:627.30px;top:44.00px;font-size:12.5px;color:#444;-webkit-text-stroke:0.18px #444;letter-spacing:-0.233px;'>View</span>
<span class="t" style='left:681.52px;top:44.00px;font-size:12.5px;color:#444;-webkit-text-stroke:0.18px #444;transform:scaleX(1.0781);transform-origin:0 0;'>Help</span>
<span class="t" style='left:737.40px;top:44.00px;font-size:12.5px;color:#2b579a;letter-spacing:0.259px;'>Table Design</span>
<span class="t" style='left:839.38px;top:44.00px;font-size:12.5px;color:#2b579a;-webkit-text-stroke:0.2px #2b579a;transform:scaleX(1.1172);transform-origin:0 0;'>Layout</span>
<span class="t" style='left:1004.05px;top:44.00px;font-size:12.5px;color:#2b579a;-webkit-text-stroke:0.2px #2b579a;transform:scaleX(1.0589);transform-origin:0 0;'>Share</span>
<span class="t" style='left:30.29px;top:72.70px;font-size:12px;color:#444;-webkit-text-stroke:0.18px #444;letter-spacing:-0.291px;'>Select</span>
<span class="t" style='left:31.20px;top:96.00px;font-size:12px;color:#444;-webkit-text-stroke:0.18px #444;letter-spacing:-0.171px;'>View Gridlines</span>
<span class="t" style='left:30.21px;top:119.00px;font-size:12px;color:#444;-webkit-text-stroke:0.18px #444;letter-spacing:-0.080px;'>Properties</span>
<span class="t" style='left:47.30px;top:145.60px;font-size:12px;color:#444;-webkit-text-stroke:0.18px #444;transform:scaleX(0.9402);transform-origin:0 0;'>Table</span>
<span class="t" style='left:149.81px;top:73.00px;font-size:12px;color:#444;-webkit-text-stroke:0.18px #444;letter-spacing:-0.232px;'>Draw Table</span>
<span class="t" style='left:149.92px;top:95.80px;font-size:12px;color:#444;-webkit-text-stroke:0.18px #444;transform:scaleX(0.8869);transform-origin:0 0;'>Eraser</span>
<span class="t" style='left:156.71px;top:145.60px;font-size:12px;color:#444;-webkit-text-stroke:0.18px #444;letter-spacing:-0.238px;'>Draw</span>
<span class="t" style='left:233.51px;top:106.80px;font-size:12px;color:#444;-webkit-text-stroke:0.18px #444;letter-spacing:-0.118px;'>Delete</span>
<span class="t" style='left:286.30px;top:106.80px;font-size:12px;color:#444;-webkit-text-stroke:0.18px #444;letter-spacing:-0.140px;'>Insert</span>
<span class="t" style='left:285.40px;top:122.60px;font-size:12px;color:#444;-webkit-text-stroke:0.18px #444;letter-spacing:0.081px;'>Above</span>
<span class="t" style='left:344.50px;top:73.80px;font-size:12px;color:#444;-webkit-text-stroke:0.18px #444;letter-spacing:-0.155px;'>Insert Below</span>
<span class="t" style='left:344.50px;top:97.80px;font-size:12px;color:#444;-webkit-text-stroke:0.18px #444;letter-spacing:-0.067px;'>Insert Left</span>
<span class="t" style='left:344.50px;top:121.80px;font-size:12px;color:#444;-webkit-text-stroke:0.18px #444;letter-spacing:-0.088px;'>Insert Right</span>
<span class="t" style='left:270.51px;top:145.60px;font-size:12px;color:#444;-webkit-text-stroke:0.18px #444;letter-spacing:-0.324px;'>Rows &amp; Columns</span>
<span class="t" style='left:453.61px;top:73.00px;font-size:12px;color:#a8a6a4;letter-spacing:-0.161px;'>Merge Cells</span>
<span class="t" style='left:453.29px;top:95.70px;font-size:12px;color:#444;-webkit-text-stroke:0.18px #444;letter-spacing:-0.129px;'>Split Cells</span>
<span class="t" style='left:453.29px;top:118.80px;font-size:12px;color:#444;-webkit-text-stroke:0.18px #444;letter-spacing:-0.129px;'>Split Table</span>
<span class="t" style='left:460.31px;top:145.60px;font-size:12px;color:#444;-webkit-text-stroke:0.18px #444;letter-spacing:0.028px;'>Merge</span>
<span class="t" style='left:564.00px;top:73.60px;font-size:12px;color:#444;-webkit-text-stroke:0.18px #444;transform:scaleX(0.9444);transform-origin:0 0;'>0.58"</span>
<span class="t" style='left:561.00px;top:121.70px;font-size:12px;color:#444;-webkit-text-stroke:0.18px #444;letter-spacing:0.167px;'>AutoFit</span>
<span class="t" style='left:566.35px;top:145.60px;font-size:12px;color:#444;-webkit-text-stroke:0.18px #444;transform:scaleX(0.9181);transform-origin:0 0;'>Cell Size</span>
<span class="t" style='left:759.00px;top:106.50px;font-size:12px;color:#444;-webkit-text-stroke:0.18px #444;transform:scaleX(0.8909);transform-origin:0 0;'>Text</span>
<span class="t" style='left:743.71px;top:122.70px;font-size:12px;color:#444;-webkit-text-stroke:0.18px #444;letter-spacing:0.098px;'>Direction</span>
<span class="t" style='left:810.69px;top:106.50px;font-size:12px;color:#444;-webkit-text-stroke:0.18px #444;letter-spacing:-0.097px;'>Cell</span>
<span class="t" style='left:798.81px;top:122.70px;font-size:12px;color:#444;-webkit-text-stroke:0.18px #444;letter-spacing:0.163px;'>Margins</span>
<span class="t" style='left:732.40px;top:145.60px;font-size:12px;color:#444;-webkit-text-stroke:0.18px #444;letter-spacing:-0.109px;'>Alignment</span>
<span class="t" style='left:867.78px;top:104.70px;font-size:12px;color:#444;-webkit-text-stroke:0.18px #444;transform:scaleX(0.9322);transform-origin:0 0;'>Data</span>
<span class="t" style='left:594.04px;top:215.70px;font-size:21.5px;color:#111;font-weight:700;-webkit-text-stroke:0.45px #111;transform:scaleX(1.1046);transform-origin:0 0;'>Split cells</span>
<span class="t" style='left:745.93px;top:231.70px;font-size:21.5px;color:#111;font-weight:700;-webkit-text-stroke:0.45px #111;transform:scaleX(1.1310);transform-origin:0 0;'>set number of rows and</span>
<span class="t" style='left:833.47px;top:263.30px;font-size:21.5px;color:#111;font-weight:700;-webkit-text-stroke:0.45px #111;transform:scaleX(1.1083);transform-origin:0 0;'>columns</span>
<span class="t" style='left:755.54px;top:582.10px;font-size:21.5px;color:#111;font-weight:700;-webkit-text-stroke:0.45px #111;transform:scaleX(1.1031);transform-origin:0 0;'>Spilt cells dialog box</span>
<span class="t" style='left:279.71px;top:307.00px;font-size:19px;color:#1a1a1a;font-weight:700;font-family:"Liberation Serif",serif;transform:scaleX(0.9243);transform-origin:0 0;'>COMPUTER DETAILS</span>
<span class="t" style='left:279.58px;top:363.00px;font-size:19px;color:#1a1a1a;font-weight:700;font-family:"Liberation Serif",serif;transform:scaleX(1.0602);transform-origin:0 0;'>Computer</span>
<span class="t" style='left:430.00px;top:363.00px;font-size:19px;color:#1a1a1a;font-weight:700;font-family:"Liberation Serif",serif;transform:scaleX(0.8889);transform-origin:0 0;'>RAM</span>
<span class="t" style='left:578.59px;top:363.00px;font-size:19px;color:#1a1a1a;font-weight:700;font-family:"Liberation Serif",serif;transform:scaleX(1.0431);transform-origin:0 0;'>Color</span>
<span class="t" style='left:279.90px;top:419.30px;font-size:19px;color:#1a1a1a;font-family:"Liberation Serif",serif;letter-spacing:-0.056px;'>Dell</span>
<span class="t" style='left:430.00px;top:419.30px;font-size:19px;color:#1a1a1a;font-family:"Liberation Serif",serif;letter-spacing:0.251px;'>4gig</span>
<span class="t" style='left:578.90px;top:419.30px;font-size:19px;color:#1a1a1a;font-family:"Liberation Serif",serif;letter-spacing:0.313px;'>Black</span>
<span class="t" style='left:279.93px;top:475.80px;font-size:19px;color:#1a1a1a;font-family:"Liberation Serif",serif;transform:scaleX(0.9614);transform-origin:0 0;'>HP</span>
<span class="t" style='left:428.09px;top:475.80px;font-size:19px;color:#1a1a1a;font-family:"Liberation Serif",serif;transform:scaleX(1.0815);transform-origin:0 0;'>16gig</span>
<span class="t" style='left:579.60px;top:475.80px;font-size:19px;color:#1a1a1a;font-family:"Liberation Serif",serif;transform:scaleX(1.0739);transform-origin:0 0;'>White</span>
<span class="t" style='left:796.29px;top:358.50px;font-size:12px;color:#000;-webkit-text-stroke:0.22px #000;letter-spacing:-0.129px;'>Split Cells</span>
<span class="t" style='left:907.70px;top:358.50px;font-size:12px;color:#000;-webkit-text-stroke:0.22px #000;'>?</span>
<span class="t" style='left:794.01px;top:391.40px;font-size:12px;color:#000;-webkit-text-stroke:0.22px #000;letter-spacing:-0.101px;'>Number of columns:</span>
<span class="t" style='left:794.01px;top:414.30px;font-size:12px;color:#000;-webkit-text-stroke:0.22px #000;letter-spacing:-0.037px;'>Number of rows:</span>
<span class="t" style='left:910.52px;top:391.00px;font-size:12px;color:#000;-webkit-text-stroke:0.22px #000;'>2</span>
<span class="t" style='left:910.34px;top:413.70px;font-size:12px;color:#000;-webkit-text-stroke:0.22px #000;'>1</span>
<span class="t" style='left:811.21px;top:442.90px;font-size:12px;color:#838383;letter-spacing:-0.112px;'>Merge cells before split</span>
<span class="t" style='left:843.30px;top:472.60px;font-size:12px;color:#000;-webkit-text-stroke:0.22px #000;transform:scaleX(0.8527);transform-origin:0 0;'>OK</span>
<span class="t" style='left:917.64px;top:472.60px;font-size:12px;color:#000;-webkit-text-stroke:0.22px #000;transform:scaleX(0.9286);transform-origin:0 0;'>Cancel</span>
<span class="t" style='left:7.05px;top:710.20px;font-size:11.5px;color:#444;-webkit-text-stroke:0.18px #444;letter-spacing:-0.132px;'>Page 1 of 1</span>
<span class="t" style='left:85.10px;top:710.20px;font-size:11.5px;color:#444;-webkit-text-stroke:0.18px #444;letter-spacing:0.149px;'>11 words</span>
<span class="t" style='left:205.00px;top:710.20px;font-size:11.5px;color:#444;-webkit-text-stroke:0.18px #444;letter-spacing:-0.083px;'>Accessibility: Investigate</span>
<span class="t" style='left:707.85px;top:710.20px;font-size:11.5px;color:#444;-webkit-text-stroke:0.18px #444;letter-spacing:-0.338px;'>Focus</span>
<span class="t" style='left:1015.17px;top:709.60px;font-size:11px;color:#444;-webkit-text-stroke:0.18px #444;transform:scaleX(0.9511);transform-origin:0 0;'>100%</span>
</div>
<div class="a" style="left:0;top:0;width:1px;height:728px;background:#6e6c6a;"></div>
<div class="a" style="left:0;top:0;width:1062px;height:1px;background:#6f6a63;"></div>
</body></html>
